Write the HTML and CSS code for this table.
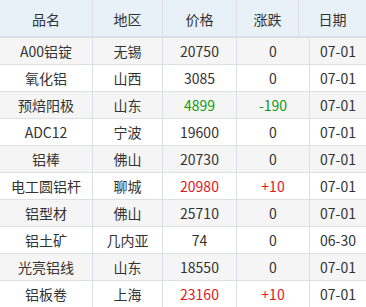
FILE: index.html
```html
<!DOCTYPE html>
<html lang="zh-CN">
<head>
<meta charset="utf-8">
<title>铝价行情</title>
<link rel="stylesheet" href="styles.css">
</head>
<body>
<div class="quote">
  <table class="grid head">
    <colgroup><col class="h1"><col class="h2"><col class="h3"><col class="h4"><col class="h5"></colgroup>
    <thead>
      <tr><th>品名</th><th>地区</th><th>价格</th><th>涨跌</th><th>日期</th></tr>
    </thead>
  </table>
  <table class="grid body">
    <colgroup><col class="b1"><col class="b2"><col class="b3"><col class="b4"><col class="b5"></colgroup>
    <tbody>
      <tr><td>A00铝锭</td><td>无锡</td><td>20750</td><td>0</td><td>07-01</td></tr>
      <tr><td>氧化铝</td><td>山西</td><td>3085</td><td>0</td><td>07-01</td></tr>
      <tr><td>预焙阳极</td><td>山东</td><td class="down">4899</td><td class="down">-190</td><td>07-01</td></tr>
      <tr><td>ADC12</td><td>宁波</td><td>19600</td><td>0</td><td>07-01</td></tr>
      <tr><td>铝棒</td><td>佛山</td><td>20730</td><td>0</td><td>07-01</td></tr>
      <tr><td>电工圆铝杆</td><td>聊城</td><td class="up">20980</td><td class="up">+10</td><td>07-01</td></tr>
      <tr><td>铝型材</td><td>佛山</td><td>25710</td><td>0</td><td>07-01</td></tr>
      <tr><td>铝土矿</td><td>几内亚</td><td>74</td><td>0</td><td>06-30</td></tr>
      <tr><td>光亮铝线</td><td>山东</td><td>18550</td><td>0</td><td>07-01</td></tr>
      <tr><td>铝板卷</td><td>上海</td><td class="up">23160</td><td class="up">+10</td><td>07-01</td></tr>
    </tbody>
  </table>
</div>
</body>
</html>
```
FILE: styles.css
```css
html, body {
  margin: 0;
  padding: 0;
  background: #ffffff;
}
.quote {
  width: 366px;
  overflow: hidden;
  font-family: "Noto Sans CJK SC", "Noto Sans", sans-serif;
  font-size: 14px;
  color: #333333;
}
.grid {
  width: 366px;
  table-layout: fixed;
  border-collapse: separate;
  border-spacing: 0;
}
.grid th, .grid td {
  box-sizing: border-box;
  padding: 0;
  text-align: center;
  font-weight: normal;
  white-space: nowrap;
  border-left: 1px solid #dcdfe6;
}
.grid th:first-child, .grid td:first-child {
  border-left: none;
}
.head th {
  height: 38px;
  background: #e8f0f8;
  border-bottom: 2px solid #dcdfe6;
  padding-top: 2px;
}
.body td {
  height: 27px;
  border-bottom: 1px solid #dcdfe6;
}
.body tr:nth-child(odd) td {
  background: #f5f5f5;
}
.h1 { width: 92px; }
.h2 { width: 70px; }
.h3 { width: 74px; }
.h4 { width: 62px; }
.h5 { width: 68px; }
.b1 { width: 92px; }
.b2 { width: 70px; }
.b3 { width: 74px; }
.b4 { width: 73px; }
.b5 { width: 57px; }
.up { color: #e8141c; }
.down { color: #129a12; }
```
